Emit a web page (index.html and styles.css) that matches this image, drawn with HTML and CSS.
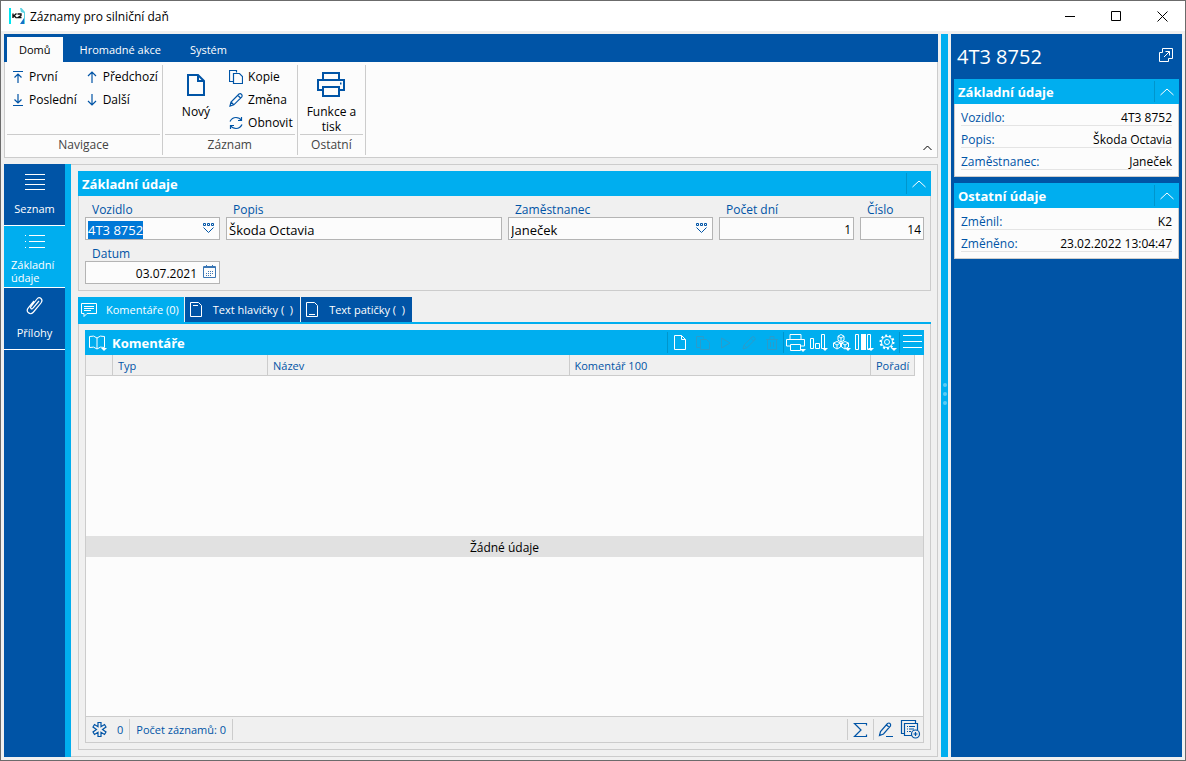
FILE: index.html
```
<!DOCTYPE html>
<html lang="cs">
<head>
<meta charset="utf-8">
<title>Záznamy pro silniční daň</title>
<link rel="stylesheet" href="styles.css">
</head>
<body>
<svg class="defs" aria-hidden="true">
  <symbol id="chevron" viewBox="0 0 14 8"><path d="M.5 7 7 1l6.500 6"/></symbol>
  <symbol id="page" viewBox="0 0 18 22"><path d="M1 1h10l6 6v14H1zM11 1v6h6"/></symbol>
  <symbol id="copy" viewBox="0 0 14 14"><path d="M4.500 11.500h-4V.5h7v2M4.500 3.500h6l3 3v7h-9z"/></symbol>
  <symbol id="pencil" viewBox="0 0 14 14"><path d="M1 13l1-4 8-8q1.500-.8 2.500.3t.3 2.500l-8 8zM2 9l3 3M9 2.500 11.500 5"/></symbol>
  <symbol id="printer" viewBox="0 0 28 25"><path d="M6 8V1h16v7M6 18H1V8h26v10h-5M6 15h16v9H6z"/><path d="M23 11.500h1.500"/></symbol>
  <symbol id="drop" viewBox="0 0 12 10"><path d="M.5.5h2v2h-2zM4.500.5h2v2h-2zM8.500.5h2v2h-2zM.5 4.500l5 5 5-5"/></symbol>
</svg>
<div class="window">
  <header class="titlebar">
    <svg class="logo" width="16" height="16" viewBox="0 0 16 16"><path d="M0 0h2v16H0z" fill="#00e5f0"/><path d="M11 0h1.500L16 4v12h-1V5l-3-1z" fill="#5cd3e3"/><path d="M15 10v6h-4z" fill="#1672c8"/><path d="M4 5.500V10M7.500 5.500 5 7.700 7.500 10M8.500 6H12v1.500L9 9.500h3.500" fill="none" stroke="#111" stroke-width="1.400"/></svg>
    <h1 class="caption">Záznamy pro silniční daň</h1>
    <div class="winbuttons">
      <button aria-label="Minimalizovat"><svg width="11" height="11"><path d="M0 5.500h10"/></svg></button>
      <button aria-label="Maximalizovat"><svg width="11" height="11"><path d="M.5.5h9v9h-9z"/></svg></button>
      <button aria-label="Zavřít"><svg width="11" height="11"><path d="M.5.5l10 10M10.500.5l-10 10"/></svg></button>
    </div>
  </header>

  <div class="workspace">
    <div class="left">
      <section class="ribbon">
        <nav class="ribbon-tabs">
          <button class="ribbon-tab active">Domů</button>
          <button class="ribbon-tab">Hromadné akce</button>
          <button class="ribbon-tab">Systém</button>
        </nav>
        <div class="ribbon-body">
          <div class="group">
            <div class="group-items">
              <div class="stack">
                <button class="cmd"><svg width="12" height="12"><path d="M1 .5h10M6 12V3M2.500 6.500 6 3l3.500 3.500"/></svg>První</button>
                <button class="cmd"><svg width="12" height="12"><path d="M1 11.500h10M6 0v9M2.500 5.500 6 9l3.500-3.500"/></svg>Poslední</button>
              </div>
              <div class="stack">
                <button class="cmd"><svg width="12" height="12"><path d="M6 12V1M2 5l4-4 4 4"/></svg>Předchozí</button>
                <button class="cmd"><svg width="12" height="12"><path d="M6 0v11M2 7l4 4 4-4"/></svg>Další</button>
              </div>
            </div>
            <div class="group-label">Navigace</div>
          </div>
          <div class="group">
            <div class="group-items">
              <button class="bigcmd new"><svg width="18" height="24"><use href="#page"/></svg>Nový</button>
              <div class="stack">
                <button class="cmd"><svg width="14" height="14"><use href="#copy"/></svg>Kopie</button>
                <button class="cmd"><svg width="14" height="14"><use href="#pencil"/></svg>Změna</button>
                <button class="cmd"><svg width="14" height="14" viewBox="0 0 14 14"><path d="M1 5.500Q3 1.500 7 1.500q3.500 0 5.500 3M12.500 1v3.500H9M13 8.500q-2 4-6 4-3.500 0-5.500-3M1.500 13V9.500H5"/></svg>Obnovit</button>
              </div>
            </div>
            <div class="group-label">Záznam</div>
          </div>
          <div class="group">
            <div class="group-items single">
              <button class="bigcmd"><svg width="28" height="25"><use href="#printer"/></svg><span>Funkce a<br>tisk</span></button>
            </div>
            <div class="group-label">Ostatní</div>
          </div>
          <button class="collapse" aria-label="Sbalit pás"><svg width="9" height="6" viewBox="0 0 9 6"><path d="M.5 5l4-4 4 4"/></svg></button>
        </div>
      </section>

      <div class="content">
        <nav class="sidebar">
          <button class="side"><svg width="20" height="19"><path d="M0 2.500h20M0 7.500h20M0 12.500h20M0 17.500h20"/></svg><span>Seznam</span></button>
          <button class="side active"><svg width="20" height="16"><path d="M0 1.500h1M4 1.500h16M0 7.500h1M4 7.500h16M0 13.500h1M4 13.500h16"/></svg><span>Základní údaje</span></button>
          <button class="side"><svg class="clip" width="20" height="19" viewBox="0 0 20 19"><path d="M14 5 8 12q-1 1.500-2 .5t0-2L12 3q2-2.500 4-.5t0 4.500l-7.500 9q-2.500 3-5 .8t-.2-5L9 5"/></svg><span>Přílohy</span></button>
        </nav>
        <main class="main">
          <section class="panel">
            <div class="bar"><h2>Základní údaje</h2><button class="fold" aria-label="Sbalit"><svg width="14" height="8"><use href="#chevron"/></svg></button></div>
            <form class="fields">
              <div class="field"><label for="vozidlo">Vozidlo</label><div class="box"><input id="vozidlo" value="4T3 8752"><button type="button" aria-label="Vybrat vozidlo"><svg width="12" height="10"><use href="#drop"/></svg></button></div></div>
              <div class="field"><label for="popis">Popis</label><div class="box"><input id="popis" value="Škoda Octavia"></div></div>
              <div class="field"><label for="zam">Zaměstnanec</label><div class="box"><input id="zam" value="Janeček"><button type="button" aria-label="Vybrat zaměstnance"><svg width="12" height="10"><use href="#drop"/></svg></button></div></div>
              <div class="field"><label for="dni">Počet dní</label><div class="box"><input id="dni" class="num" value="1"></div></div>
              <div class="field"><label for="cislo">Číslo</label><div class="box"><input id="cislo" class="num" value="14"></div></div>
              <div class="field"><label for="datum">Datum</label><div class="box"><input id="datum" class="num" value="03.07.2021"><button type="button" aria-label="Kalendář"><svg class="calendar" width="13" height="13"><path d="M.5 1.500h12v11H.5zM1 2.500h11"/><path d="M3.500 0v2M9.500 0v2M5 6.500h1M7 6.500h1M9 6.500h1M3 8.500h1M5 8.500h1M7 8.500h1M9 8.500h1M3 10.500h1M5 10.500h1M7 10.500h1"/></svg></button></div></div>
            </form>
          </section>

          <div class="detail">
            <nav class="tabs">
              <button class="tab active"><svg width="16" height="14"><path d="M.5.5h15v10H6l-3 3v-3H.5zM3 3.500h10M3 5.500h10M3 7.500h7"/></svg>Komentáře (0)</button>
              <button class="tab"><svg width="12" height="15"><path d="M.5.5h8l3 3v11H.5zM3 3.500h5"/></svg>Text hlavičky ( &nbsp;)</button>
              <button class="tab"><svg width="12" height="15"><path d="M.5.5h8l3 3v11H.5zM3 12.500h6"/></svg>Text patičky ( &nbsp;)</button>
            </nav>
            <div class="tabpage">
              <div class="bar">
                <button class="book" aria-label="Kniha"><svg width="18" height="17"><path d="M8 3Q5 0 .5 1.500v11Q5 11 8 14q3-3 7.500-1.500v-11Q11 0 8 3v11"/><path class="solid" d="M12 13h6l-3 3z"/></svg></button>
                <h2>Komentáře</h2>
                <div class="tools">
                  <button aria-label="Nový"><svg width="12" height="15"><path d="M.5.5h7l4 4v10H.5zM7.500.5v4h4"/></svg></button>
                  <button disabled aria-label="Kopie"><svg width="14" height="14"><use href="#copy"/></svg></button>
                  <button disabled aria-label="Spustit"><svg width="10" height="12"><path d="M.5 1v10L9 6z"/></svg></button>
                  <button disabled aria-label="Změna"><svg width="14" height="14"><use href="#pencil"/></svg></button>
                  <button disabled aria-label="Smazat"><svg width="12" height="14"><path d="M0 3.500h12M4 3V.5h4V3M1.500 3.500v10h9v-10M4.500 6v5M7.500 6v5"/></svg></button>
                </div>
                <div class="tools">
                  <button aria-label="Tisk"><svg width="20" height="18"><path d="M4 5V.5h11V5M4 12H.5V5.500h18V12H15M4.500 10.500h10v6h-10z"/><path class="solid" d="M14 15h6l-3 3z"/></svg></button>
                  <button aria-label="Graf"><svg width="18" height="17"><path d="M.5 4.500h3v10h-3zM5.500 9.500h4v5h-4zM11.500.5h3v14h-3z"/><path class="solid" d="M12 14h6l-3 3z"/></svg></button>
                  <button aria-label="Kostky"><svg width="18" height="17"><path d="M8 .5l3 1.700v4L8 8 5 6.200v-4zM5 2.200 8 4l3-1.800M8 4v4M4 7.500 7.500 9v4L4 15 .5 13V9zM.5 9 4 11l3.500-2M4 11v4M12 7.500 15.500 9v4L12 15l-3.500-2V9zM8.500 9l3.500 2 3.500-2M12 11v4"/><path class="solid" d="M12 14h6l-3 3z"/></svg></button>
                  <button aria-label="Sloupce"><svg width="19" height="17"><path d="M.5.5h3v15h-3zM12.500.5h3v15h-3z"/><path class="solid" d="M6 0h5v16H6zM13 14h6l-3 3z"/></svg></button>
                  <button aria-label="Nastavení"><svg width="18" height="17"><circle cx="8" cy="8" r="2.500"/><circle cx="8" cy="8" r="5.500"/><circle class="teeth" cx="8" cy="8" r="6.500"/><path class="solid" d="M12 14h6l-3 3z"/></svg></button>
                </div>
                <button class="burger" aria-label="Nabídka"><svg width="19" height="13"><path d="M0 .5h19M0 6.500h19M0 12.500h19"/></svg></button>
              </div>
              <div class="grid">
                <table>
                  <colgroup><col class="c-mark"><col class="c-typ"><col class="c-name"><col class="c-note"><col class="c-order"><col class="c-end"></colgroup>
                  <thead><tr><th></th><th>Typ</th><th>Název</th><th>Komentář 100</th><th>Pořadí</th><td></td></tr></thead>
                </table>
                <div class="empty"><p>Žádné údaje</p></div>
                <footer class="status">
                  <span class="count"><svg width="15" height="15" viewBox="0 0 15 15"><path d="M6 .5h3v4.200l3.500-2.200L14 5l-3.500 2.500L14 10l-1.500 2.500L9 10.300v4.200H6v-4.200l-3.500 2.200L1 10l3.500-2.500L1 5l1.500-2.500L6 4.700z"/></svg>0</span>
                  <span class="total">Počet záznamů: 0</span>
                  <button class="sum" aria-label="Součet"><svg width="13" height="14"><path d="M12.500 2.500v-2H.5L7 7 .5 13.500h12v-2"/></svg></button>
                  <button aria-label="Upravit"><svg width="15" height="15"><path d="M.5 13.500l1-4 7-8q1.500-1 2.500 0t.5 2.500l-7 8zM7.500 3l3 2.500M7 14.500h7"/></svg></button>
                  <button aria-label="Přidat"><svg width="19" height="19"><path d="M3 13.500H.5V.5h14V3M11 15.500H3.500v-12h13V10M6 6.500h1M8 6.500h6M6 9h1M8 9h5M6 11.500h1M8 11.500h2"/><circle cx="14.500" cy="14" r="4"/><path d="M14.500 12v4M12.500 14h4"/></svg></button>
                </footer>
              </div>
            </div>
          </div>
        </main>
      </div>
    </div>

    <div class="splitter"><i></i><i></i><i></i></div>

    <aside class="preview">
      <div class="preview-head"><h2>4T3 8752</h2><button aria-label="Otevřít"><svg width="14" height="14"><path d="M3.500 4.500h-3v9h9v-3M3.500 4.500v-4h10v10h-4M5 9l5.500-5.500M6.500 3.500h4v4"/></svg></button></div>
      <section class="card">
        <div class="bar"><h2>Základní údaje</h2><button class="fold" aria-label="Sbalit"><svg width="14" height="8"><use href="#chevron"/></svg></button></div>
        <dl><div><dt>Vozidlo:</dt><dd>4T3 8752</dd></div><div><dt>Popis:</dt><dd>Škoda Octavia</dd></div><div><dt>Zaměstnanec:</dt><dd>Janeček</dd></div></dl>
      </section>
      <section class="card">
        <div class="bar"><h2>Ostatní údaje</h2><button class="fold" aria-label="Sbalit"><svg width="14" height="8"><use href="#chevron"/></svg></button></div>
        <dl><div><dt>Změnil:</dt><dd>K2</dd></div><div><dt>Změněno:</dt><dd>23.02.2022 13:04:47</dd></div></dl>
      </section>
    </aside>
  </div>
</div>
<script src="app.js"></script>
</body>
</html>
```
FILE: styles.css
```
:root {
  --blue: #0054a6;
  --cyan: #00aeef;
  --face: #f0f0f0;
  --paper: #fcfcfc;
  --line: #cccccc;
}
* { box-sizing: border-box; }
body {
  margin: 0;
  font: 12px/15px "Open Sans", "Noto Sans", sans-serif;
  color: #000;
}
h1, h2, p, dl, dd { margin: 0; font-size: 12px; font-weight: 400; }
button {
  margin: 0;
  padding: 0;
  border: 0;
  background: none;
  font: inherit;
  color: inherit;
}
svg { flex: none; fill: none; stroke: currentColor; overflow: visible; }
.defs { display: none; }
.solid { fill: currentColor; stroke: none; }
.teeth { stroke-width: 2; stroke-dasharray: 2 2; }

.window {
  display: flex;
  flex-direction: column;
  height: 100vh;
  border: 1px solid #6b6b6b;
  background: var(--face);
}
.titlebar {
  display: flex;
  align-items: center;
  gap: 5px;
  height: 30px;
  padding-left: 8px;
  background: #fff;
}
.logo { stroke: none; }
.caption { flex: 1; }
.winbuttons { display: flex; }
.winbuttons button { width: 46px; height: 28px; display: grid; place-items: center; }

.workspace { flex: 1; min-height: 0; display: flex; gap: 3px; padding: 3px; }
.left { flex: 1; min-width: 0; display: flex; flex-direction: column; gap: 6px; }

.ribbon-tabs { display: flex; height: 28px; padding: 3px 3px 0; background: var(--blue); }
.ribbon-tab { padding: 0 12px 0 17px; color: #fff; font-size: 11px; }
.ribbon-tab.active { padding: 0 12px; background: var(--paper); color: #000; }
.ribbon-body {
  position: relative;
  display: flex;
  height: 96px;
  padding: 3px 0 2px;
  border: 1px solid var(--line);
  border-top: 0;
  background: var(--paper);
}
.group { display: flex; flex-direction: column; padding: 0 2px; border-right: 1px solid var(--line); }
.group-items { flex: 1; display: flex; gap: 9px; padding: 0 2px 0 5px; }
.group-items.single { padding: 0 7px; }
.group-label { border-top: 1px solid var(--line); text-align: center; height: 21px; line-height: 20px; color: #444; }
.stack { display: flex; flex-direction: column; }
.cmd { display: flex; align-items: center; gap: 5px; height: 23px; }
.cmd svg, .bigcmd svg { color: var(--blue); }
.cmd svg { stroke-width: 1.2; }
.bigcmd { display: flex; flex-direction: column; align-items: center; gap: 7px; padding-top: 7px; height: 69px; }
.bigcmd svg { stroke-width: 2; }
.bigcmd.new { padding-top: 8px; padding-left: 12px; margin-right: 10px; }
.collapse { position: absolute; right: 5px; bottom: 3px; }

.content { flex: 1; min-height: 0; display: flex; }
.sidebar { width: 67px; background: var(--blue); border-right: 6px solid var(--cyan); }
.side {
  display: flex;
  flex-direction: column;
  align-items: center;
  justify-content: space-between;
  width: 100%;
  height: 62px;
  padding: 8px 7px 10px;
  border-bottom: 1px solid #fff;
  color: #fff;
  font-size: 11px;
  line-height: 13px;
}
.side.active { background: var(--cyan); padding-bottom: 3px; text-align: left; }
.clip { stroke-width: 1.2; }

.main {
  flex: 1;
  min-width: 0;
  display: flex;
  flex-direction: column;
  gap: 6px;
  padding: 6px;
  padding-left: 7px;
  border: 1px solid var(--line);
  border-left: 0;
}
.bar { display: flex; align-items: center; height: 25px; padding-left: 4px; background: var(--cyan); color: #fff; }
.bar h2 { flex: 1; font-size: 13px; line-height: 16px; font-weight: 700; }
.fold { width: 25px; height: 21px; border-left: 1px solid #0095cc; }

.panel .fields {
  display: grid;
  grid-template-columns: 135fr 276fr 205fr 135fr 64fr;
  gap: 6px;
  padding: 6px;
  border: 1px solid var(--line);
  border-top: 0;
}
.field { display: flex; flex-direction: column; min-width: 0; }
.field label { padding-left: 7px; color: var(--blue); }
.box { display: flex; align-items: center; height: 23px; border: 1px solid #b4b4b4; background: var(--paper); }
.box input {
  flex: 1;
  min-width: 0;
  height: 21px;
  margin: 0;
  padding: 2px 2px 0;
  border: 0;
  outline: 0;
  background: none;
  font: inherit;
  font-size: 13px;
}
.box input::selection { background: #0078d7; color: #fff; }
.box .num { font-size: 12px; text-align: right; }
.box button { width: 20px; height: 21px; color: var(--blue); }
.box .calendar { color: #3a76b4; }

.detail { flex: 1; min-height: 0; display: flex; flex-direction: column; }
.tabs { display: flex; gap: 1px; height: 27px; border-bottom: 2px solid var(--cyan); }
.tab { display: flex; align-items: center; gap: 11px; padding: 0 7px 0 5px; background: var(--blue); color: #fff; font-size: 11px; }
.tab.active { background: var(--cyan); gap: 9px; padding: 0 5px 0 3px; }
.tabpage {
  flex: 1;
  min-height: 0;
  display: flex;
  flex-direction: column;
  padding: 6px;
  border: 1px solid var(--line);
  border-top: 0;
}
.book { margin-right: 5px; height: 16px; }
.tools { display: flex; align-items: center; height: 21px; border-left: 1px solid #0095cc; }
.tools button { width: 23px; height: 18px; display: grid; place-items: center; }
.tools button:disabled { color: #2a9ccb; }
.burger { width: 25px; height: 21px; border-left: 1px solid #0095cc; }

.grid { flex: 1; min-height: 0; display: flex; flex-direction: column; border: 1px solid var(--line); border-top: 0; background: var(--paper); }
table { width: 100%; table-layout: fixed; border-collapse: separate; border-spacing: 0; }
.c-mark { width: 27px; }
.c-typ { width: 155px; }
.c-order { width: 44px; }
.c-end { width: 8px; }
th {
  height: 21px;
  padding: 0 5px;
  border-right: 1px solid var(--line);
  border-bottom: 1px solid var(--line);
  background: var(--face);
  color: var(--blue);
  font-size: 11px;
  font-weight: 400;
  text-align: left;
  white-space: nowrap;
}
td { padding: 0; }
.empty { flex: 1; display: grid; align-items: center; }
.empty p { height: 21px; line-height: 23px; background: #e1e1e1; text-align: center; }
.status {
  display: flex;
  align-items: center;
  height: 26px;
  padding-right: 1px;
  border-top: 1px solid var(--line);
  background: var(--face);
  color: var(--blue);
  font-size: 11px;
}
.status span { display: flex; align-items: center; gap: 10px; height: 21px; padding: 0 6px; border-right: 1px solid var(--line); }
.status button { width: 24px; height: 21px; display: grid; place-items: center; }
.status .sum { width: 27px; margin-left: auto; border: solid var(--line); border-width: 0 1px; }
.status svg { stroke-width: 1.2; }

.splitter {
  display: flex;
  flex-direction: column;
  align-items: center;
  justify-content: center;
  gap: 5px;
  width: 7px;
  padding-bottom: 4px;
  background: var(--cyan);
}
.splitter i { width: 4px; height: 4px; border-radius: 2px; background: #5ccbf5; }

.preview { width: 231px; padding: 0 3px; background: var(--blue); color: #fff; }
.preview-head { display: flex; justify-content: space-between; align-items: center; height: 45px; padding: 0 6px 0 3px; }
.preview-head h2 { font-size: 20px; line-height: 24px; }
.card { margin-bottom: 6px; }
dl { padding: 0 6px 6px; border: 1px solid var(--line); border-top: 0; background: var(--paper); color: #000; }
dl div { display: flex; justify-content: space-between; height: 22px; padding-top: 3px; line-height: 22px; border-bottom: 1px solid #e4e4e4; }
dt { color: var(--blue); }
```
FILE: app.js
```
const vehicle = document.getElementById('vozidlo');
vehicle.focus();
vehicle.select();
```
